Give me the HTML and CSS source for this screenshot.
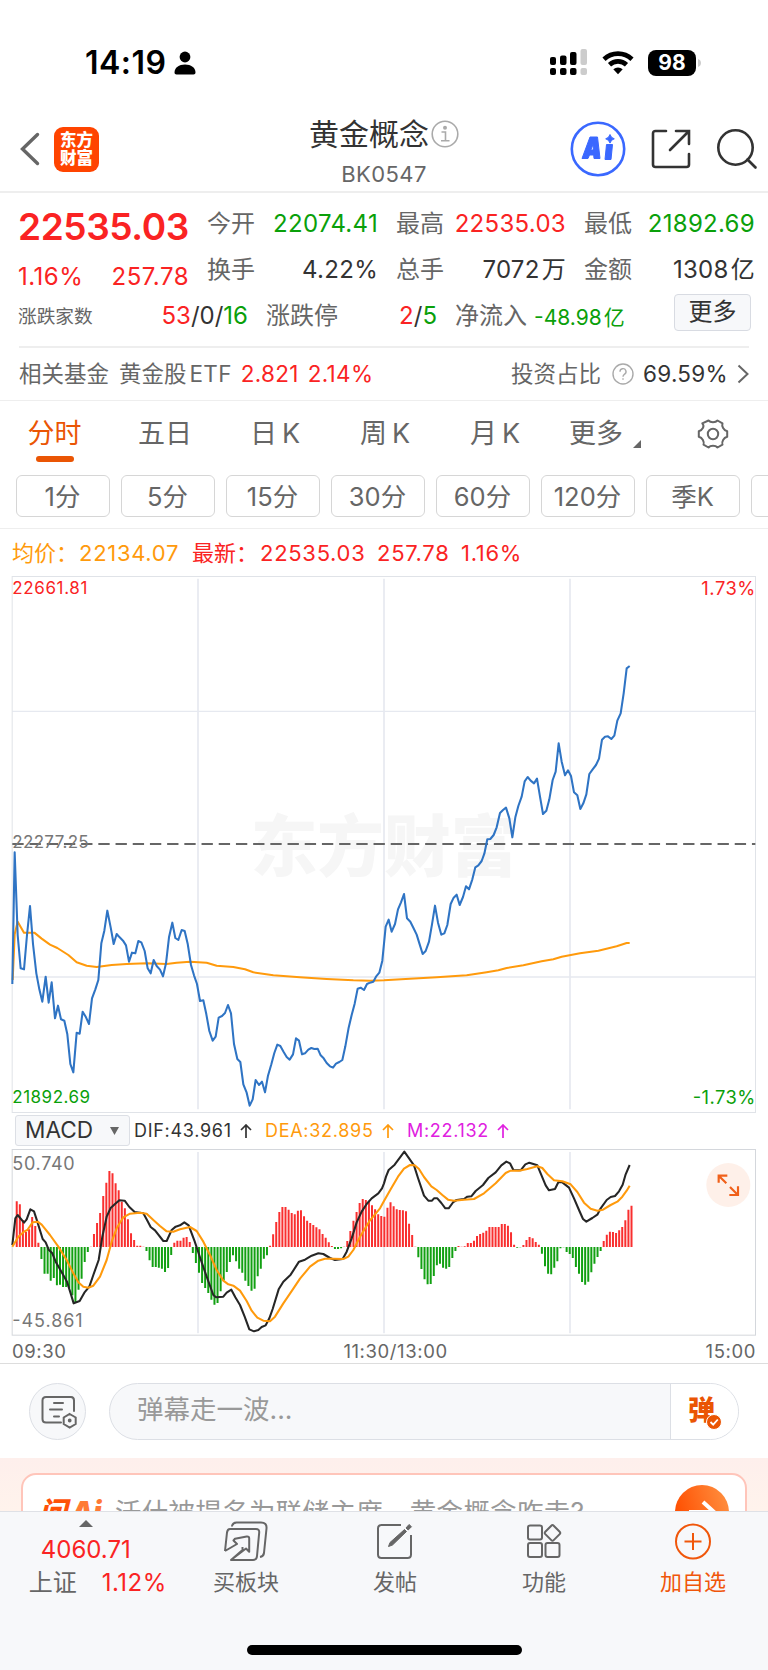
FILE: index.html
```html
<!DOCTYPE html>
<html lang="zh-CN">
<head>
	<meta charset="utf-8">
	<title>黄金概念 BK0547</title>
	<link rel="stylesheet" href="styles.css">
</head>
<body>
	<div class="statusbar">
		<span class="clock">14:19</span>
		<svg class="person" width="22" height="24" viewBox="0 0 22 24"><circle cx="11" cy="6" r="5.4"/><path d="M.5 21.5C.5 16.500 5 13.500 11 13.500s10.500 3 10.500 8c0 1.200-.8 2-2 2h-17c-1.200 0-2-.8-2-2z"/></svg>
		<svg class="signal" width="38" height="27" viewBox="0 0 38 27">
			<rect x="0" y="8" width="6" height="8" rx="2"/><rect x="10" y="6.500" width="6.500" height="9.500" rx="2"/><rect x="20" y="3" width="6.500" height="13" rx="2"/><rect class="off" x="30.500" y="0" width="6.500" height="16" rx="2"/>
			<rect x="0" y="19" width="6" height="7" rx="2"/><rect x="10" y="19" width="6.500" height="7" rx="2"/><rect x="20" y="19" width="6.500" height="7" rx="2"/><rect class="off" x="30.500" y="19" width="6.500" height="7" rx="2"/>
		</svg>
		<svg class="wifi" width="32" height="24" viewBox="0 0 32 24">
			<path class="arc" d="M2 8.200a20.500 20.500 0 0 1 28 0M7.500 13.700a12.500 12.500 0 0 1 17 0"/>
			<path d="M11.300 18.200a7 7 0 0 1 9.400 0L16 23.200z"/>
		</svg>
		<span class="battery">98</span>
		<svg width="4" height="8" viewBox="0 0 4 8"><path class="off" d="M0 0c2 .7 3 2.200 3 4s-1 3.300-3 4z"/></svg>
	</div>

	<div class="header">
		<div class="side">
			<svg class="back" width="20" height="34" viewBox="0 0 20 34"><path d="M17.500 2.500L2.500 17l15 14.500"/></svg>
			<div class="logo">东方<br>财富</div>
		</div>
		<div class="title">
			<div class="name">黄金概念<svg width="28" height="28" viewBox="0 0 28 28"><circle cx="14" cy="14" r="12.800"/><circle class="dot" cx="14" cy="7.800" r="2"/><path d="M10.500 12h4v8.500M10 20.700h8.500"/></svg></div>
			<div class="code">BK0547</div>
		</div>
		<div class="side actions">
			<svg width="56" height="56" viewBox="0 0 56 56">
				<circle class="ring" cx="28" cy="28" r="26.200"/>
				<path class="ai" d="M12 37.500L20 16h7.500l2.500 21.500h-6l-.3-3.500h-4.200l-1.500 3.500zM20.800 29h2.600l-.4-5.500zM36.500 23.500h6l-1.500 15h-6z"/>
				<path class="ai" d="M40 13.500q1 3.500 4.300 4.300-3.300.9-4.300 4.300-1-3.400-4.300-4.300 3.300-.8 4.300-4.300z"/>
			</svg>
			<svg class="line" width="40" height="40" viewBox="0 0 40 40"><path d="M15 2H4.500Q2 2 2 4.500v31Q2 38 4.500 38h31q2.500 0 2.500-2.500V25M25 2h13v13M37.500 2.500L19 21"/></svg>
			<svg class="line" width="42" height="42" viewBox="0 0 42 42"><circle cx="19.500" cy="19.500" r="17.200"/><path d="M31.500 31.500l8 8"/></svg>
		</div>
	</div>

	<div class="quote">
		<div class="last">
			<div class="price red">22535.03</div>
			<div class="change red"><span>1.16%</span><span>257.78</span></div>
		</div>
		<div class="cells">
			<div class="cell"><label>今开</label><span class="green">22074.41</span></div>
			<div class="cell"><label>最高</label><span class="red">22535.03</span></div>
			<div class="cell"><label>最低</label><span class="green">21892.69</span></div>
			<div class="cell"><label>换手</label><span>4.22%</span></div>
			<div class="cell"><label>总手</label><span>7072<i>万</i></span></div>
			<div class="cell"><label>金额</label><span>1308<i>亿</i></span></div>
		</div>
	</div>
	<div class="breadth">
		<div class="cell updown"><label>涨跌家数</label><span><b class="red">53</b>/0/<b class="green">16</b></span></div>
		<div class="cell limit"><label>涨跌停</label><span><b class="red">2</b>/<b class="green">5</b></span></div>
		<div class="flow"><label>净流入</label><span class="green">-48.98<i>亿</i></span></div>
		<div class="more">更多</div>
	</div>

	<div class="fund">
		<span>相关基金</span>
		<span class="etf">黄金股<em>ETF</em></span>
		<span class="red num">2.821</span>
		<span class="red num">2.14%</span>
		<span class="ratio">投资占比</span>
		<svg class="help" width="22" height="22" viewBox="0 0 22 22"><circle cx="11" cy="11" r="10"/><path d="M8 8.800a3 3 0 1 1 4.600 2.400c-1.100.7-1.600 1.200-1.600 2.500M11 15.300v1.500"/></svg>
		<span class="dark num">69.59%</span>
		<svg class="arrow" width="12" height="20" viewBox="0 0 12 20"><path d="M1.500 1.500L10.500 10l-9 8.500"/></svg>
	</div>

	<div class="tabs">
		<div class="tab active">分时</div>
		<div class="tab">五日</div>
		<div class="tab">日<em>K</em></div>
		<div class="tab">周<em>K</em></div>
		<div class="tab">月<em>K</em></div>
		<div class="tab">更多<svg width="8" height="8" viewBox="0 0 8 8"><path d="M8 0v8H0z"/></svg></div>
		<svg class="gear" width="32" height="30" viewBox="0 0 32 30"><path d="M11.500 1.500q1.500 1.800 4.500 1.800t4.500-1.800l5 2.800q-.8 2.200.6 4.700t4.100 3.300v5.400q-2.700.7-4.100 3.200t-.6 4.800l-5 2.800q-1.500-1.800-4.500-1.800t-4.500 1.800l-5-2.800q.8-2.300-.6-4.800t-4.100-3.200v-5.400q2.700-.8 4.100-3.300t-.6-4.700z"/><circle cx="16" cy="15" r="5.200"/></svg>
	</div>
	<div class="periods">
		<span>1分</span><span>5分</span><span>15分</span><span>30分</span><span>60分</span><span>120分</span><span>季K</span><span></span>
	</div>

	<div class="legend">
		<span class="orange">均价：</span><span class="orange n1">22134.07</span>
		<span class="red">最新：</span><span class="red n2">22535.03</span><span class="red n3">257.78</span><span class="red n4">1.16%</span>
	</div>

	<!-- minute chart, 3 units per pixel -->
	<svg class="chart" width="768" height="538" viewBox="0 0 2304 1614">
		<text class="mark" x="752" y="884" textLength="800">东方财富</text>
		<path class="grid" d="M37 406H2266M37 1203H2266"/>
		<path class="grid wide" d="M594 8V1600M1152 8V1600M1710 8V1600"/>
		<rect class="frame" x="36.500" y="1.500" width="2230" height="1608"/>
		<path class="base" d="M37 804H2266"/>
		<g transform="translate(0 732)">
			<polyline class="avg" points="38,480 44,343 53,305 72,338 103,338 125,356 150,374 172,384 205,405 230,427 260,437 290,441 335,435 380,432 440,430 500,432 530,428 570,425 620,428 650,437 700,441 735,448 760,457 820,466 900,472 980,477 1060,481 1110,482"/>
			<polyline class="now" points="37,492 44,97 53,345 62,445 72,448 81,345 90,258 99,372 109,460 118,508 127,545 137,470 146,548 155,487 165,595 174,557 183,598 193,602 202,643 211,732 220,757 230,638 239,641 248,575 258,592 267,612 276,535 286,508 295,480 304,370 313,332 322,272 332,322 341,372 350,342 359,352 369,362 378,376 387,425 396,398 406,400 415,363 424,367 434,393 443,445 452,460 461,420 470,438 480,449 489,469 498,430 507,352 517,308 526,354 535,360 545,330 554,333 563,371 573,435 582,466 591,492 600,543 610,541 619,583 628,633 638,662 647,650 656,593 666,588 675,579 684,555 693,580 702,672 712,717 721,726 730,793 740,818 749,857 758,838 767,780 777,795 786,785 795,817 804,767 814,733 823,699 832,674 841,678 851,696 860,711 869,719 879,703 888,655 897,662 906,703 915,700 925,689 934,684 943,687 953,686 962,706 971,715 980,729 990,739 999,743 1008,731 1018,726 1027,720 1036,679 1046,623 1055,585 1064,551 1073,506 1082,503 1092,510 1101,492 1110,488"/>
		</g>
		<g transform="translate(1110 192)">
			<polyline class="avg" points="0,1022 42,1021 120,1016 200,1012 290,1006 350,997 385,991 410,984 460,976 515,964 550,958 575,950 630,940 685,932 740,919 770,909 779,909"/>
			<polyline class="now" points="0,1028 10,1025 18,1010 28,998 37,962 47,860 56,839 65,875 75,852 84,808 93,787 102,762 111,835 121,845 130,863 140,884 149,913 158,942 167,933 177,905 186,853 195,797 204,848 214,884 223,880 232,855 242,792 251,773 260,764 269,795 279,771 288,739 297,748 307,718 316,682 325,676 335,663 343,641 352,598 361,597 371,585 380,562 390,519 399,510 408,503 418,535 427,592 436,532 445,498 455,470 464,424 473,411 482,422 492,430 501,416 510,470 519,522 529,512 538,478 548,420 557,395 566,310 575,365 585,406 594,391 603,408 612,457 622,466 631,507 640,490 649,463 658,402 668,388 678,375 687,356 696,299 705,290 714,289 724,297 733,287 742,242 752,220 761,160 770,85 779,78"/>
		</g>
		<text class="label up" x="37" y="54" textLength="225">22661.81</text>
		<text class="label right up" x="2104" y="56" textLength="162">1.73%</text>
		<text class="label" x="37" y="816" textLength="229">22277.25</text>
		<text class="label down" x="37" y="1580" textLength="233">21892.69</text>
		<text class="label right down" x="2078" y="1583" textLength="188">-1.73%</text>
	</svg>

	<div class="indicator">
		<div class="select">MACD<svg width="9" height="8" viewBox="0 0 9 8"><path d="M0 0h9L4.500 8z"/></svg></div>
		<span class="dif">DIF:43.961 <svg width="12" height="14" viewBox="0 0 12 14"><path d="M6 14V1M1 6l5-5 5 5"/></svg></span>
		<span class="dea orange">DEA:32.895 <svg width="12" height="14" viewBox="0 0 12 14"><path d="M6 14V1M1 6l5-5 5 5"/></svg></span>
		<span class="m">M:22.132 <svg width="12" height="14" viewBox="0 0 12 14"><path d="M6 14V1M1 6l5-5 5 5"/></svg></span>
	</div>

	<div class="macd">
		<svg class="chart" width="768" height="188" viewBox="0 144 2304 564">
			<path class="grid wide" d="M594 156V700M1152 156V700M1710 156V700"/>
			<rect class="frame dark" x="36.500" y="148.500" width="2230" height="557"/>
			<path id="redBars" class="bar-up"/>
			<path id="greenBars" class="bar-down"/>
			<polyline class="difline" points="37,435 46,355 53,345 72,368 80,358 91,328 102,334 111,362 128,417 137,427 146,449 157,460 167,485 183,513 201,545 212,580 221,610 239,603 253,578 268,560 280,525 296,480 307,410 320,350 332,324 345,312 358,301 374,302 388,321 404,336 430,340 441,360 452,381 465,391 490,423 500,423 515,390 527,380 540,376 553,367 566,376 575,400 584,424 600,472 620,530 640,585 648,592 670,590 680,578 694,569 706,592 720,615 734,650 748,688 762,694 775,690 785,681 797,676 808,655 818,627 836,568 850,545 872,524 897,485 915,479 935,467 955,460 970,462 990,474 1005,480 1028,477 1040,455 1055,415 1070,367 1085,335 1100,312 1115,295 1135,280 1146,265 1152,250 1158,230 1166,210 1184,194 1213,155 1242,196 1254,234 1272,287 1285,302 1296,302 1302,295 1312,295 1324,309 1336,325 1346,325 1360,306 1370,300 1392,297 1402,290 1414,289 1427,273 1449,255 1465,234 1487,217 1504,196 1519,185 1530,190 1540,210 1562,211 1576,193 1588,188 1612,196 1622,220 1637,256 1647,271 1665,267 1675,247 1687,247 1707,263 1722,295 1737,330 1749,357 1759,365 1777,354 1792,344 1802,325 1820,300 1832,291 1845,288 1857,274 1868,254 1877,223 1889,195"/>
			<polyline class="avg" points="37,440 55,410 72,395 82,390 98,367 113,365 125,374 150,405 175,440 200,480 220,520 235,547 250,560 265,563 280,557 300,530 320,480 335,425 350,385 370,352 390,341 420,338 440,341 460,360 480,378 500,394 520,395 540,388 570,381 590,393 610,425 630,465 650,510 670,542 685,553 700,557 720,572 740,603 755,632 772,653 790,662 810,664 825,650 850,610 880,566 900,536 930,500 955,482 975,476 1000,476 1030,477 1045,470 1060,450 1080,410 1110,361 1140,325 1152,303 1172,268 1194,230 1212,206 1230,195 1244,196 1257,207 1272,231 1294,259 1310,270 1327,285 1344,299 1362,302 1392,299 1422,297 1452,280 1487,250 1517,219 1532,212 1557,212 1582,207 1612,199 1627,204 1642,222 1662,241 1687,244 1712,253 1732,276 1752,308 1772,326 1792,332 1809,329 1832,315 1852,305 1867,290 1880,272 1889,257"/>
			<text class="scale" x="37" y="211" textLength="187">50.740</text>
			<text class="scale" x="37" y="681" textLength="211">-45.861</text>
			<circle class="zoombtn" cx="2185" cy="255" r="66"/>
			<path class="zoomico" d="M2156 248V227H2182M2157 228L2179 250M2188 285H2214V259M2213 284L2190 261"/>
		</svg>
		<div class="times"><span>09:30</span><span class="noon">11:30/13:00</span><span>15:00</span></div>
	</div>

	<div class="danmu">
		<div class="round">
			<svg width="36" height="34" viewBox="0 0 36 34"><path d="M20 27.500H5q-3.500 0-3.500-3.500V5.500Q1.500 2 5 2h25q3 0 3 3.500V16M13 8h9M9 14.500h12M13 21.500h5M28.700 19l6 3.500v6.500l-6 3.500-6-3.500v-6.500z"/><circle cx="28.700" cy="25.500" r=".9"/></svg>
		</div>
		<div class="input">
			<span class="hint">弹幕走一波...</span>
			<div class="send"><span>弹</span><svg width="16" height="16" viewBox="0 0 16 16"><circle cx="8" cy="8" r="7.500"/><path d="M4.500 8l2.700 2.700L11.800 5.500"/></svg></div>
		</div>
	</div>

	<div class="banner">
		<div class="card">
			<span class="ask">问<em>Ai</em></span>
			<span class="question">沃什被提名为联储主席，黄金概念咋走?</span>
			<svg class="go" width="54" height="54" viewBox="0 0 54 54">
				<defs><linearGradient id="go" x1="0" y1=".5" x2="1" y2=".2"><stop offset="0" stop-color="#ff4e00"/><stop offset="1" stop-color="#ff9040"/></linearGradient></defs>
				<circle cx="27" cy="27" r="27" fill="url(#go)"/><path d="M14 27h25M28 17l11 10-11 10"/>
			</svg>
		</div>
	</div>

	<div class="nav">
		<div class="index">
			<svg width="14" height="7" viewBox="0 0 14 7"><path d="M7 0l7 7H0z"/></svg>
			<div class="red point">4060.71</div>
			<div class="sub"><span>上证</span><span class="red">1.12%</span></div>
		</div>
		<div class="item">
			<svg width="46" height="42" viewBox="0 0 46 42"><path d="M9 5.500Q9.500 1.500 13.500 1.500H38q6 0 5.500 6L41 32q-.5 3.500-4 4M7 8h26q3.500 0 3.200 3.500L34 35q-.3 4-4 4H8L19.500 29V26M2 30L4 11.500Q4.500 8 7 8M8 39l15-11.500 3.200 3.300V17.500q0-2.300-2.500-2L12 17.700 10.500 19.500l3.500 3.500L2 30"/></svg>
			<span>买板块</span>
		</div>
		<div class="item">
			<svg width="40" height="42" viewBox="0 0 40 42"><path d="M26 4H6.500Q3 4 3 7.500v26Q3 37 6.500 37h26q3.500 0 3.500-3.500V14"/><path class="pen" d="M13.500 25.500L15 21.500 29.500 8.500l2 2L17.500 24zM31 7l3-3.500 2.500 2.200-3.300 3.300z"/></svg>
			<span>发帖</span>
		</div>
		<div class="item">
			<svg width="36" height="42" viewBox="0 0 36 42"><rect x="2" y="4.500" width="14" height="14" rx="2"/><rect x="2" y="22" width="14" height="14" rx="2"/><rect x="19.500" y="22" width="14" height="14" rx="2"/><path d="M25.300 4.700q1.200-1.200 2.400 0l6 6q1.200 1.200 0 2.400l-6 6q-1.200 1.200-2.400 0l-6-6q-1.200-1.200 0-2.400z"/></svg>
			<span>功能</span>
		</div>
		<div class="item add">
			<svg width="38" height="42" viewBox="0 0 38 42"><circle cx="19" cy="20.500" r="17"/><path d="M19 12v17M10.500 20.500h17"/></svg>
			<span>加自选</span>
		</div>
	</div>
	<div class="home"><div class="pill"></div></div>

	<script>
		// histogram value of each minute, in chart units above/below the zero line
		var hist = [137,128,81,45,53,90,63,13,-36,-80,-80,-101,-93,-115,-113,-120,-120,-123,-145,-165,-128,-95,-45,-15,1,39,72,102,153,193,228,221,191,170,136,116,83,41,21,4,4,1,-12,-40,-60,-60,-62,-65,-75,-63,-24,13,19,19,28,30,15,-18,-48,-77,-108,-123,-138,-158,-173,-168,-133,-100,-75,-45,-25,-43,-65,-77,-101,-117,-131,-125,-88,-65,-35,-25,4,38,75,105,120,120,112,102,98,109,110,92,79,72,66,59,53,39,28,14,3,-6,-6,-4,1,18,48,79,105,132,144,141,139,125,113,98,93,
			91,118,134,122,113,111,110,107,70,36,1,-31,-66,-97,-112,-111,-87,-55,-50,-62,-65,-60,-33,-12,3,1,2,12,12,19,33,39,43,49,60,60,60,60,69,69,64,44,7,-2,-1,6,21,30,26,15,7,-20,-58,-80,-82,-62,-43,-4,-1,-15,-21,-33,-60,-80,-105,-113,-104,-76,-50,-30,-12,18,37,46,45,42,50,60,80,112,124];
		var up = "", down = "";

		for(var i = 0; i < hist.length; i++){
			var x = (50.2 + i * 9.268).toFixed(1);
			var bar = "M" + x + " 441v" + (-hist[i]);
			if(hist[i] > 0){
				up += bar;
			}else{
				down += bar;
			}
		}
		document.getElementById("redBars").setAttribute("d", up);
		document.getElementById("greenBars").setAttribute("d", down);
	</script>
</body>
</html>
```
FILE: styles.css
```css
*{
	box-sizing: border-box;
}
body{
	margin: 0;
	width: 768px;
	height: 1670px;
	overflow: hidden;
	background-color: #fff;
	color: #333;
	font-family: Inter, "Noto Sans CJK SC", sans-serif;
	font-size: 24px;
	line-height: 1;
}
svg{
	display: block;
	flex: none;
}
i, em{
	font-style: normal;
}
b{
	font-weight: 400;
}
.red{
	color: #fa2323;
}
.green{
	color: #0aa00a;
}
.orange{
	color: #ff9a0c;
}

/* status bar */
.statusbar{
	display: flex;
	align-items: center;
	height: 110px;
	padding: 15px 0 0 85px;
}
.clock{
	font-size: 32px;
	font-weight: 600;
	color: #000;
	width: 89px;
	letter-spacing: 0.5px;
}
.signal{
	margin-left: 354px;
}
.off{
	fill: #ccc;
}
.wifi{
	margin: 0 14px;
}
.arc{
	fill: none;
	stroke: #000;
	stroke-width: 4.6;
}
.battery{
	width: 48px;
	height: 26px;
	margin-right: 2px;
	border-radius: 8px;
	background-color: #000;
	color: #fff;
	font-size: 21px;
	font-weight: 700;
	line-height: 26px;
	text-align: center;
}

/* header */
.header{
	display: flex;
	justify-content: space-between;
	height: 83px;
	border-bottom: 2px solid #eee;
}
.side{
	display: flex;
	align-items: center;
	width: 240px;
	padding: 0 0 3px 20px;
}
.back path{
	fill: none;
	stroke: #666;
	stroke-width: 3.4;
	stroke-linecap: round;
}
.logo{
	width: 45px;
	height: 45px;
	margin-left: 14px;
	padding-top: 4px;
	border-radius: 9px;
	background-color: #ff4400;
	color: #fff;
	font-size: 16.500px;
	font-weight: 800;
	line-height: 18.500px;
	text-align: center;
}
.title{
	width: 180px;
	padding-top: 9px;
	text-align: center;
}
.name{
	display: flex;
	align-items: center;
	height: 30px;
	margin-left: 15px;
	font-size: 30px;
	white-space: nowrap;
}
.name svg{
	margin-left: 2px;
	fill: none;
	stroke: #aaa;
	stroke-width: 1.6;
}
.name .dot{
	fill: #aaa;
	stroke: none;
}
.code{
	margin-top: 14px;
	font-size: 22px;
	letter-spacing: 0.4px;
	color: #666;
}
.actions{
	padding-left: 42px;
}
.actions svg + svg{
	margin-left: 25px;
}
.actions svg:last-child{
	margin-left: 25px;
}
.ring{
	fill: none;
	stroke: #3a68ff;
	stroke-width: 2.6;
}
.ai{
	fill: #3a68ff;
	fill-rule: evenodd;
	stroke: #3a68ff;
	stroke-width: 1;
	stroke-linejoin: round;
}
.line{
	fill: none;
	stroke: #333;
	stroke-width: 2.6;
	stroke-linecap: round;
}

/* quote */
.quote{
	display: flex;
	height: 103px;
	padding: 12px 12px 0 18px;
}
.last{
	width: 189px;
}
.price{
	padding-top: 3px;
	font-size: 37px;
	font-weight: 600;
	letter-spacing: -0.4px;
}
.change{
	display: flex;
	justify-content: space-between;
	width: 171px;
	margin-top: 20px;
	letter-spacing: 0.5px;
}
.cells{
	display: grid;
	grid-template-columns: 171px 170px 171px;
	grid-template-rows: 46px 46px;
	column-gap: 18px;
	margin-top: -4px;
}
.cell{
	display: flex;
	align-items: center;
	justify-content: space-between;
}
.cells span{
	letter-spacing: 0.3px;
}
label{
	color: #666;
}
.cells i, .flow i{
	margin-left: 2px;
}
.breadth{
	display: flex;
	align-items: center;
	height: 52px;
	margin: 0 19px;
	padding-bottom: 10px;
	border-bottom: 2px solid #eee;
}
.updown{
	width: 229px;
}
.updown label{
	margin: 3px 0 0 -1px;
	font-size: 18.700px;
}
.limit{
	width: 171px;
	margin-left: 18px;
}
.flow{
	display: flex;
	align-items: center;
	margin-left: 18px;
}
.flow span{
	margin: 3px 0 0 7px;
	font-size: 21px;
}
.more{
	width: 77px;
	height: 37px;
	margin: -8px -2px 0 auto;
	border: 1px solid #d8dbe2;
	border-radius: 4px;
	background-color: #f7f8fa;
	line-height: 34px;
	text-align: center;
}

/* related fund */
.fund{
	display: flex;
	align-items: center;
	height: 53px;
	padding: 0 19px;
	border-bottom: 1px solid #eee;
	color: #666;
	font-size: 22.500px;
}
.etf{
	margin-left: 10px;
}
.etf em{
	margin-left: 3px;
	letter-spacing: 0.3px;
}
.fund .num{
	margin-left: 9px;
	letter-spacing: 0.3px;
}
.fund .red{
	color: #fa2323;
}
.ratio{
	margin-left: auto;
}
.help{
	margin-left: 11px;
	fill: none;
	stroke: #aaa;
	stroke-width: 1.4;
}
.fund .dark{
	color: #333;
}
.arrow{
	margin-left: 9px;
	fill: none;
	stroke: #666;
	stroke-width: 2;
}

/* tabs */
.tabs{
	display: flex;
	align-items: center;
	height: 74px;
	color: #666;
	font-size: 27px;
}
.tab{
	display: flex;
	justify-content: center;
	width: 110px;
	height: 62px;
	padding-top: 13px;
}
.tab em{
	margin-left: 5px;
}
.tab svg{
	margin: 20px 0 0 10px;
	fill: #666;
}
.active{
	flex-direction: column;
	align-items: center;
	justify-content: flex-start;
	padding-right: 1px;
	color: #ea5504;
}
.active::after{
	content: "";
	width: 38px;
	height: 6px;
	margin-top: 9px;
	border-radius: 3px;
	background-color: #ea5504;
}
.gear{
	margin: -8px 0 0 37px;
	fill: none;
	stroke: #666;
	stroke-width: 2;
	stroke-linejoin: round;
}
.periods{
	display: flex;
	gap: 11px;
	height: 54px;
	padding-left: 15.500px;
	border-bottom: 1px solid #eee;
	overflow: hidden;
}
.periods span{
	flex: none;
	width: 94px;
	height: 42px;
	border: 1px solid #d6d6d6;
	border-radius: 6px;
	color: #666;
	font-size: 25.500px;
	line-height: 42px;
	text-align: center;
}

/* minute chart */
.legend{
	display: flex;
	align-items: center;
	height: 47px;
	padding-left: 12px;
	font-size: 22px;
}
.n1{
	width: 113px;
	margin-left: 1px;
}
.n2{
	width: 117px;
	margin-left: 2px;
}
.n3{
	width: 84px;
}
.n1, .n2, .n3, .n4{
	letter-spacing: 0.7px;
}
.grid{
	fill: none;
	stroke: #e6e9f0;
	stroke-width: 4;
}
.wide{
	stroke-width: 5;
}
.frame{
	fill: none;
	stroke: #e0e3e8;
	stroke-width: 3;
}
.frame.dark{
	stroke: #d4d7dc;
}
.mark{
	fill: #f6f6f6;
	font-size: 200px;
	font-weight: 900;
}
.base{
	fill: none;
	stroke: #666;
	stroke-width: 6;
	stroke-dasharray: 34 17.600;
}
.now, .avg, .difline{
	fill: none;
	stroke: #2f74c4;
	stroke-width: 6.200;
	stroke-linejoin: round;
}
.avg{
	stroke: #ff9a0c;
}
.difline{
	stroke: #262626;
}
.label{
	fill: #777;
	font-size: 51px;
}
.right{
	font-size: 55px;
}
.up{
	fill: #fa2323;
}
.down{
	fill: #0aa00a;
}

/* macd */
.indicator{
	display: flex;
	align-items: center;
	height: 34px;
	padding-left: 15px;
	font-size: 18px;
	letter-spacing: 0.7px;
}
.indicator > span{
	display: flex;
	align-items: center;
	gap: 8px;
	white-space: nowrap;
}
.indicator > span svg{
	fill: none;
	stroke: currentColor;
	stroke-width: 1.700;
}
.select{
	display: flex;
	align-items: center;
	width: 115px;
	height: 31px;
	margin-top: -1px;
	padding-left: 9px;
	border: 1px solid #dcdfe5;
	border-radius: 3px;
	background-color: #f7f8fa;
	font-size: 22.600px;
	letter-spacing: 0;
}
.select svg{
	margin-left: auto;
	margin-right: 10px;
	fill: #666;
}
.dif{
	width: 131px;
	margin-left: 4px;
}
.dea{
	width: 142px;
}
.m{
	color: #e020e0;
}
.bar-up, .bar-down{
	fill: none;
	stroke: #f92f2f;
	stroke-width: 6;
}
.bar-down{
	stroke: #12a012;
}
.scale{
	fill: #777;
	font-size: 54px;
}
.zoombtn{
	fill: #fef0e9;
}
.zoomico{
	fill: none;
	stroke: #f0601a;
	stroke-width: 6.500;
}
.times{
	display: flex;
	justify-content: space-between;
	height: 28px;
	padding: 6px 12px 0 12px;
	border-bottom: 1px solid #ddd;
	color: #666;
	font-size: 18.500px;
	letter-spacing: 0.600px;
}
.noon{
	margin-left: 19px;
}

/* comment input */
.danmu{
	display: flex;
	height: 94px;
	padding: 19px 29px 0;
}
.round{
	display: flex;
	align-items: center;
	justify-content: center;
	width: 57px;
	height: 57px;
	border: 1px solid #dcdfe5;
	border-radius: 50%;
	background-color: #f7f8fa;
}
.round svg{
	margin-left: 2px;
	fill: none;
	stroke: #666;
	stroke-width: 2;
	stroke-linecap: round;
}
.input{
	display: flex;
	justify-content: space-between;
	width: 630px;
	height: 57px;
	margin-left: 23px;
	border: 1px solid #dcdfe5;
	border-radius: 29px;
	background-color: #f7f8fa;
	overflow: hidden;
}
.hint{
	padding-left: 27px;
	color: #999;
	font-size: 26.500px;
	line-height: 50px;
}
.send{
	display: flex;
	width: 68px;
	padding: 13px 0 0 17px;
	border-left: 1px solid #dcdfe5;
	background-color: #fff;
	color: #ea5504;
	font-size: 27px;
	font-weight: 900;
}
.send svg{
	margin: 17px 0 0 -9px;
	fill: #ea5504;
}
.send circle{
	stroke: #fff;
	stroke-width: 1;
}
.send path{
	fill: none;
	stroke: #fff;
	stroke-width: 1.800;
}

/* ask banner */
.banner{
	height: 53px;
	padding: 15px 21px 0;
	background: linear-gradient(#feefec, #fff3ec);
	overflow: hidden;
}
.card{
	display: flex;
	align-items: center;
	height: 78px;
	padding: 0 20px 0 16px;
	border: 2px solid #ffc5ba;
	border-radius: 15px;
	background-color: #fff;
}
.ask{
	width: 76px;
	color: #ff5208;
	font-size: 28px;
	font-weight: 900;
	font-style: italic;
	white-space: nowrap;
}
.ask em{
	margin-left: 4px;
	color: #ff7a35;
	font-style: italic;
}
.question{
	color: #999;
	font-size: 26.500px;
	letter-spacing: 0.300px;
	white-space: nowrap;
}
.go{
	margin-left: auto;
	margin-right: -4px;
}
.go path{
	fill: none;
	stroke: #fff;
	stroke-width: 4;
}

/* bottom nav */
.nav{
	display: flex;
	height: 134px;
	border-top: 1px solid #dfe1e6;
	background-color: #f7f8fa;
	color: #666;
}
.index{
	display: flex;
	flex-direction: column;
	align-items: center;
	width: 171.500px;
	padding-top: 8px;
}
.index svg{
	fill: #666;
}
.point{
	margin-top: 11px;
	font-size: 24px;
}
.sub{
	display: flex;
	align-items: center;
	justify-content: space-between;
	width: 138px;
	margin-top: 9px;
	margin-left: 24px;
}
.sub .red{
	letter-spacing: 0.5px;
}
.item{
	display: flex;
	flex-direction: column;
	align-items: center;
	width: 149px;
	padding-top: 9px;
	font-size: 22px;
}
.item span{
	margin-top: 8px;
}
.item svg{
	fill: none;
	stroke: #666;
	stroke-width: 2;
	stroke-linejoin: round;
}
.item .pen{
	fill: #666;
	stroke-width: 1;
}
.add{
	color: #f0560a;
}
.add svg{
	stroke: #f0560a;
}
.home{
	height: 26px;
	background-color: #f7f8fa;
}
.pill{
	width: 275px;
	height: 10px;
	margin: 0 auto;
	border-radius: 5px;
	background-color: #000;
}
```
